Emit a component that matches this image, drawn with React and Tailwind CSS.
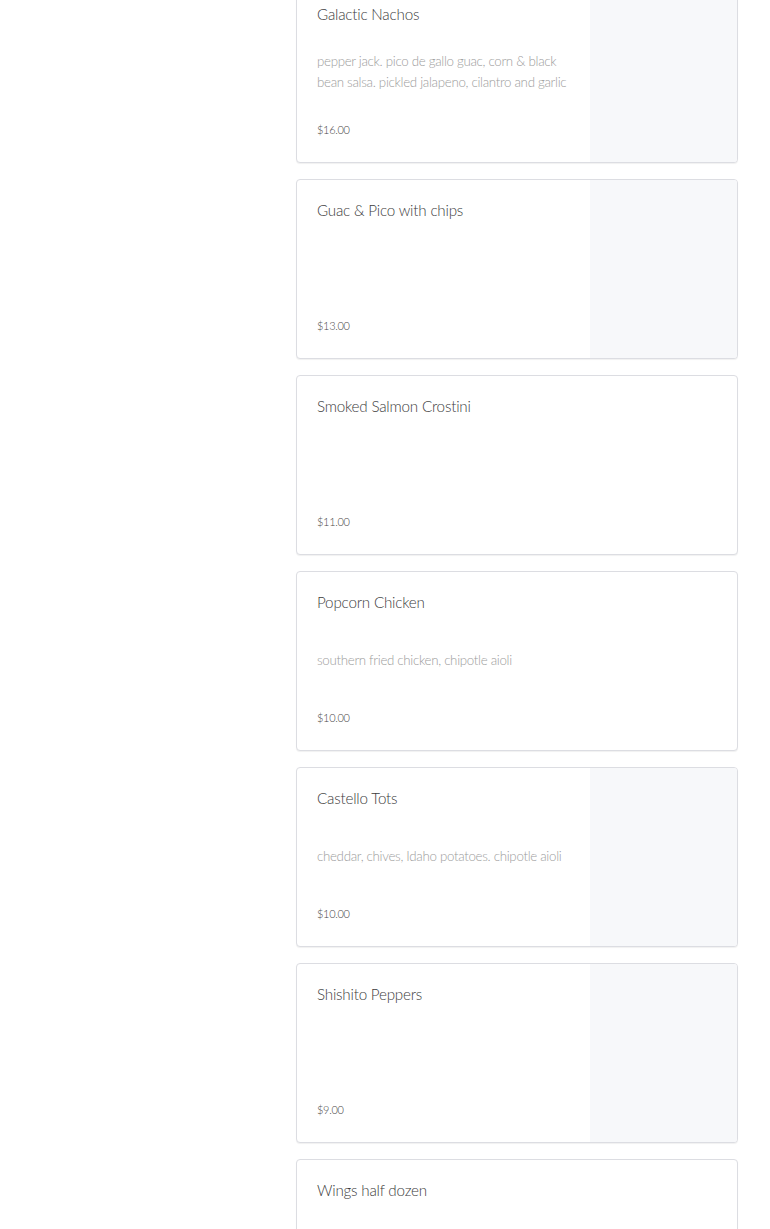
import React from 'react';

const items = [
  {
    name: 'Galactic Nachos',
    desc: 'pepper jack. pico de gallo guac, corn & black bean salsa. pickled jalapeno, cilantro and garlic',
    price: '$16.00',
    image: true,
  },
  { name: 'Guac & Pico with chips', price: '$13.00', image: true },
  { name: 'Smoked Salmon Crostini', price: '$11.00', image: false },
  {
    name: 'Popcorn Chicken',
    desc: 'southern fried chicken, chipotle aioli',
    price: '$10.00',
    image: false,
  },
  {
    name: 'Castello Tots',
    desc: 'cheddar, chives, Idaho potatoes. chipotle aioli',
    price: '$10.00',
    image: true,
  },
  { name: 'Shishito Peppers', price: '$9.00', image: true },
  { name: 'Wings half dozen', price: '$14.00', image: false },
];

// 单个菜品卡片
const MenuCard = ({ item }) => (
  <div className="flex h-[180px] overflow-hidden rounded-[4px] border border-[#dcdde2] bg-white shadow-[0_1px_1px_rgba(0,0,0,0.06)]">
    <div className="flex flex-1 flex-col justify-between px-5 pt-[18px] pb-5">
      <h3 className="text-[15.2px] leading-6 font-light tracking-[-0.2px] text-[#3c3c3c]">{item.name}</h3>
      {item.desc && (
        <p className="text-[13.3px] leading-[21px] font-light tracking-[-0.3px] text-[#9c9c9c]">{item.desc}</p>
      )}
      <span className="text-[11px] leading-6 font-light tracking-[-0.3px] text-[#4a4a4a]">{item.price}</span>
    </div>
    {item.image && <div className="w-[147px] shrink-0 bg-[#f7f8fa]" />}
  </div>
);

const App = () => {
  return (
    <div className="min-h-screen overflow-hidden bg-white font-['Lato','Liberation_Sans',sans-serif]">
      <div className="flex">
        {/* 左侧空栏 */}
        <aside className="w-[296px] shrink-0" />
        {/* 菜单列表 */}
        <main className="mt-[-17px] flex flex-1 flex-col gap-4 pr-8">
          {items.map((item) => (
            <MenuCard key={item.name} item={item} />
          ))}
        </main>
      </div>
    </div>
  );
};

export default App;
